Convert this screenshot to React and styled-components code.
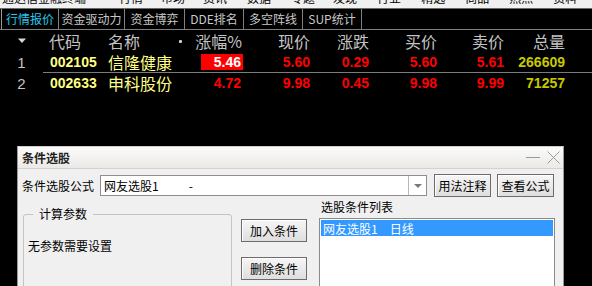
import React from "react";
import styled, { createGlobalStyle } from "styled-components";

const Global = createGlobalStyle`
  html, body { margin: 0; padding: 0; background: #000; }
  body { font-family: "Noto Sans CJK SC", "Liberation Sans", sans-serif; }
  * { box-sizing: border-box; }
`;

const CJK = `"Noto Sans CJK SC", "Liberation Sans", sans-serif`;
const NUM = `"Liberation Sans", "Noto Sans CJK SC", sans-serif`;

const Screen = styled.div`
  width: 592px;
  height: 286px;
  overflow: hidden;
  background: #000;
  display: flex;
  flex-direction: column;
`;

const MenuStrip = styled.div`
  height: 9px;
  flex: none;
  background: #f0f0f0;
  border-bottom: 1px solid #6a6a6a;
  overflow: hidden;
  display: flex;
  align-items: flex-start;
  padding-left: 2px;
`;

const MenuItem = styled.span`
  font: 12px/12px ${CJK};
  color: #000;
  margin-top: -8px;
  margin-right: ${(p) => p.$gap}px;
  white-space: nowrap;
`;

const TabBar = styled.div`
  height: 21px;
  flex: none;
  display: flex;
  border-bottom: 1px solid #808080;
  padding-left: 1px;
`;

const Tab = styled.div`
  width: ${(p) => p.$w}px;
  height: 20px;
  display: flex;
  align-items: center;
  justify-content: center;
  border-left: ${(p) => (p.$first ? "1px solid #9a9a9a" : "none")};
  border-right: 1px solid #808080;
  font: 12px/20px ${CJK};
  color: ${(p) => (p.$active ? "#26c8ee" : "#c8c8c8")};
  white-space: nowrap;
`;

const QuoteArea = styled.div`
  height: 116px;
  flex: none;
  display: flex;
  flex-direction: column;
`;

const cols = "43px 62px 70px 15px 53px 67px 59px 68px 67px 61px 1fr";

const HeadRow = styled.div`
  display: grid;
  grid-template-columns: ${cols};
  height: 22px;
  align-items: center;
  font: 16px/22px ${CJK};
  color: #c4c4c4;
`;

const Row = styled.div`
  display: grid;
  grid-template-columns: ${cols};
  height: 21px;
  align-items: center;
  padding-bottom: 1px;
  background: ${(p) =>
    p.$line
      ? "linear-gradient(#7c7c7c, #7c7c7c) no-repeat 43px 100% / calc(100% - 43px) 1px"
      : "none"};
`;

const IdxCell = styled.div`
  text-align: center;
  color: #c4c4c4;
  font: 15px ${NUM};
`;

const Caret = styled.div`
  display: flex;
  justify-content: center;
`;

const HeadText = styled.div`
  text-align: ${(p) => (p.$right ? "right" : "left")};
  padding-left: ${(p) => p.$pl || 0}px;
  padding-right: ${(p) => p.$pr || 0}px;
  white-space: nowrap;
`;

const DotCell = styled.div`
  display: flex;
  align-items: center;
  padding-left: 4px;
`;

const Dot = styled.span`
  width: 3px;
  height: 3px;
  border-radius: 1px;
  background: #d0d0d0;
`;

const Code = styled.div`
  padding-left: 7px;
  font: bold 14px ${NUM};
  color: #ffff80;
`;

const Name = styled.div`
  padding-left: 3px;
  font: 16px/18px ${CJK};
  color: #ffff86;
  white-space: nowrap;
`;

const Num = styled.div`
  text-align: right;
  font: bold 14px ${NUM};
  color: ${(p) => p.$color || "#ff0000"};
`;

const ZfCell = styled.div`
  display: flex;
  justify-content: flex-end;
`;

const ZfBox = styled.div`
  width: 42px;
  height: 16px;
  padding-right: 2px;
  text-align: right;
  font: bold 14px/16px ${NUM};
  color: ${(p) => (p.$hl ? "#fff" : "#ff0000")};
  background: ${(p) => (p.$hl ? "#ff0000" : "transparent")};
`;

/* Dialog */
const Dialog = styled.div`
  margin-left: 17px;
  width: 547px;
  flex: none;
  height: 200px;
  background: #f0f0f0;
  border-left: 1px solid #9a9a9a;
  border-right: 1px solid #9a9a9a;
  border-top: 1px solid #cfcfcf;
`;

const TitleBar = styled.div`
  height: 22px;
  display: flex;
  align-items: center;
  justify-content: space-between;
  padding: 0 3px 0 4px;
  background: linear-gradient(#fbfbfa, #ebe9e6);
  border-bottom: 1px solid #d4d2ce;
`;

const Title = styled.div`
  font: bold 12px ${CJK};
  color: #222;
`;

const WinBtns = styled.div`
  display: flex;
  align-items: center;
  gap: 7px;
`;

const Body = styled.div`
  padding: 5px 8px 0 4px;
  display: flex;
  flex-direction: column;
`;

const FormulaRow = styled.div`
  display: flex;
  align-items: center;
  height: 23px;
`;

const Label = styled.div`
  font: 12px/14px ${CJK};
  color: #000;
  white-space: nowrap;
`;

const Combo = styled.div`
  margin-left: 6px;
  width: 327px;
  height: 21px;
  background: #fff;
  border: 1px solid #8e8e8e;
  display: flex;
  align-items: stretch;
`;

const ComboText = styled.div`
  flex: 1;
  display: flex;
  align-items: center;
  padding-left: 3px;
  font: 12px ${CJK};
  color: #000;
  gap: 30px;
`;

const ComboArrow = styled.div`
  width: 18px;
  border-left: 1px solid #b8b8b8;
  display: flex;
  align-items: center;
  justify-content: center;
`;

const Button = styled.div`
  width: ${(p) => p.$w}px;
  height: 23px;
  margin-left: ${(p) => p.$ml || 0}px;
  border: 1px solid #6c6c6c;
  background: linear-gradient(#f6f6f6, #dedede);
  box-shadow: inset 1px 1px 0 #fff;
  display: flex;
  align-items: center;
  justify-content: center;
  font: 12px ${CJK};
  color: #000;
`;

const LowerRow = styled.div`
  display: flex;
  align-items: flex-start;
  margin-top: 3px;
  padding-left: 1px;
`;

const Group = styled.fieldset`
  margin: 7px 0 0 0;
  padding: 18px 4px 0 4px;
  width: 209px;
  height: 120px;
  border: 1px solid #c4c4c4;
  border-radius: 3px;
  min-width: 0;
`;

const Legend = styled.legend`
  margin-left: 5px;
  padding: 0 6px;
  font: 12px/14px ${CJK};
  color: #000;
`;

const ButtonCol = styled.div`
  margin: 19px 0 0 9px;
  display: flex;
  flex-direction: column;
  gap: 15px;
`;

const ListCol = styled.div`
  margin-left: 12px;
  display: flex;
  flex-direction: column;
  gap: 4px;
`;

const ListLabel = styled(Label)`
  padding-left: 2px;
`;

const ListBox = styled.div`
  width: 236px;
  height: 90px;
  background: #fff;
  border: 1px solid #8a8a8a;
  padding: 1px;
`;

const ListItem = styled.div`
  height: 16px;
  display: flex;
  align-items: center;
  padding-left: 2px;
  font: 12px ${CJK};
  color: ${(p) => (p.$sel ? "#fff" : "#000")};
  background: ${(p) => (p.$sel ? "#3399ff" : "transparent")};
  gap: 12px;
`;

const menus = [
  ["通达信金融终端", 33],
  ["行情", 18],
  ["市场", 18],
  ["资讯", 20],
  ["数据", 20],
  ["专题", 18],
  ["发现", 20],
  ["行业", 20],
  ["精选", 20],
  ["商品", 20],
  ["热点", 20],
  ["资料", 20],
  ["交易", 0],
];

const tabs = [
  ["行情报价", 58, true],
  ["资金驱动力", 66],
  ["资金博弈", 60],
  ["DDE排名", 59],
  ["多空阵线", 59],
  ["SUP统计", 59],
];

const rows = [
  { i: 1, code: "002105", name: "信隆健康", zf: "5.46", xj: "5.60", zd: "0.29", b: "5.60", s: "5.61", v: "266609", hl: true },
  { i: 2, code: "002633", name: "申科股份", zf: "4.72", xj: "9.98", zd: "0.45", b: "9.98", s: "9.99", v: "71257" },
];

export default function App() {
  return (
    <>
      <Global />
      <Screen>
        <MenuStrip>
          {menus.map(([t, g]) => (
            <MenuItem key={t} $gap={g}>{t}</MenuItem>
          ))}
        </MenuStrip>
        <TabBar>
          {tabs.map(([t, w, a], i) => (
            <Tab key={t} $w={w} $active={a} $first={i === 0}>{t}</Tab>
          ))}
        </TabBar>
        <QuoteArea>
          <HeadRow>
            <Caret>
              <svg width="10" height="6" viewBox="0 0 10 6">
                <polygon points="1,0.5 9,0.5 5,5" fill="#d8d8d8" />
              </svg>
            </Caret>
            <HeadText $pl={6}>代码</HeadText>
            <HeadText $pl={3}>名称</HeadText>
            <DotCell><Dot /></DotCell>
            <HeadText $right $pr={1}>涨幅%</HeadText>
            <HeadText $right>现价</HeadText>
            <HeadText $right>涨跌</HeadText>
            <HeadText $right>买价</HeadText>
            <HeadText $right $pr={-1}>卖价</HeadText>
            <HeadText $right>总量</HeadText>
          </HeadRow>
          {rows.map((r) => (
            <Row key={r.i} $line={r.hl}>
              <IdxCell>{r.i}</IdxCell>
              <Code>{r.code}</Code>
              <Name>{r.name}</Name>
              <div />
              <ZfCell><ZfBox $hl={r.hl}>{r.zf}</ZfBox></ZfCell>
              <Num>{r.xj}</Num>
              <Num>{r.zd}</Num>
              <Num>{r.b}</Num>
              <Num>{r.s}</Num>
              <Num $color="#c8c800">{r.v}</Num>
            </Row>
          ))}
        </QuoteArea>
        <Dialog>
          <TitleBar>
            <Title>条件选股</Title>
            <WinBtns>
              <svg width="14" height="13" viewBox="0 0 14 13">
                <line x1="0" y1="6.5" x2="14" y2="6.5" stroke="#9a9a9a" strokeWidth="1" />
              </svg>
              <svg width="13" height="13" viewBox="0 0 13 13">
                <line x1="0.5" y1="0.5" x2="12.5" y2="12.5" stroke="#9a9a9a" strokeWidth="1" />
                <line x1="12.5" y1="0.5" x2="0.5" y2="12.5" stroke="#9a9a9a" strokeWidth="1" />
              </svg>
            </WinBtns>
          </TitleBar>
          <Body>
            <FormulaRow>
              <Label>条件选股公式</Label>
              <Combo>
                <ComboText>
                  <span>网友选股1</span>
                  <span>-</span>
                </ComboText>
                <ComboArrow>
                  <svg width="8" height="4" viewBox="0 0 8 4">
                    <polygon points="0,0 8,0 4,4" fill="#7a7a7a" />
                  </svg>
                </ComboArrow>
              </Combo>
              <Button $w={57} $ml={7}>用法注释</Button>
              <Button $w={57} $ml={6}>查看公式</Button>
            </FormulaRow>
            <LowerRow>
              <Group>
                <Legend>计算参数</Legend>
                <Label>无参数需要设置</Label>
              </Group>
              <ButtonCol>
                <Button $w={66}>加入条件</Button>
                <Button $w={66}>删除条件</Button>
              </ButtonCol>
              <ListCol>
                <ListLabel>选股条件列表</ListLabel>
                <ListBox>
                  <ListItem $sel>
                    <span>网友选股1</span>
                    <span>日线</span>
                  </ListItem>
                </ListBox>
              </ListCol>
            </LowerRow>
          </Body>
        </Dialog>
      </Screen>
    </>
  );
}
